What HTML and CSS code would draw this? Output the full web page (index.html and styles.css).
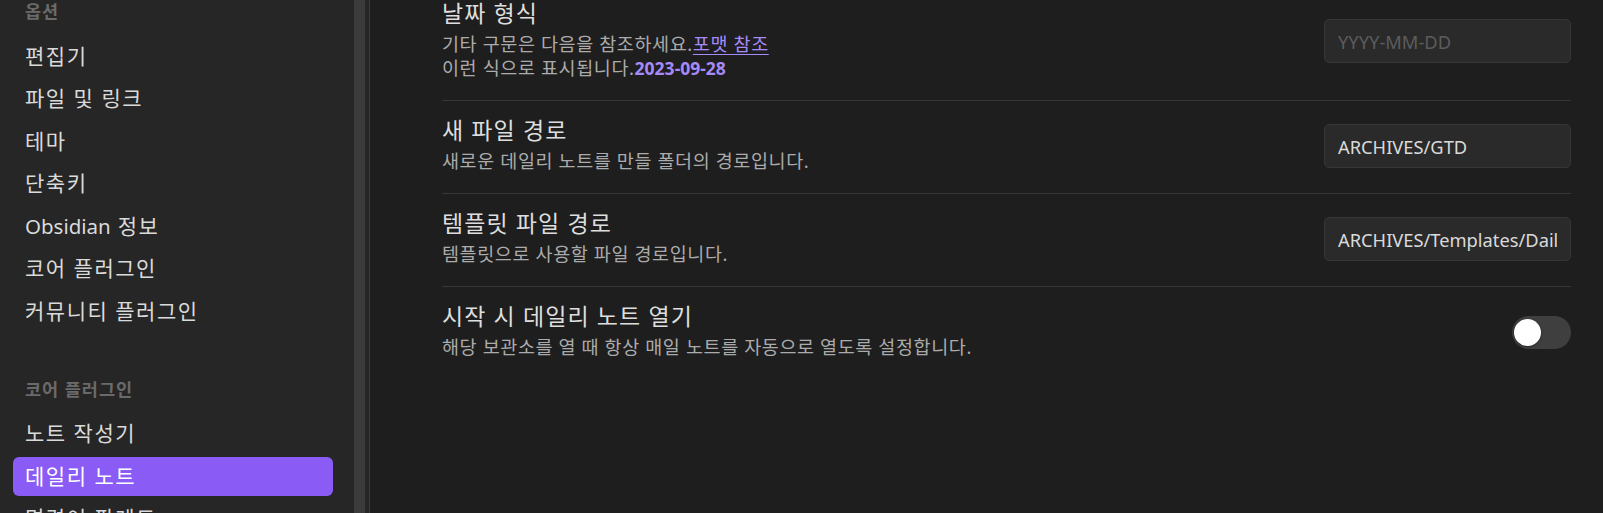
FILE: index.html
```html
<!DOCTYPE html>
<html lang="ko">
<head>
<meta charset="utf-8">
<title>설정 - 데일리 노트</title>
<link rel="stylesheet" href="styles.css">
</head>
<body>
<div class="app">
  <aside class="sidebar">
    <nav class="nav">
      <div class="nav-inner">
        <div class="nav-group">
          <div class="nav-title">옵션</div>
          <div class="nav-item">편집기</div>
          <div class="nav-item">파일 및 링크</div>
          <div class="nav-item">테마</div>
          <div class="nav-item">단축키</div>
          <div class="nav-item"><span class="latin">Obsidian</span> 정보</div>
          <div class="nav-item">코어 플러그인</div>
          <div class="nav-item">커뮤니티 플러그인</div>
        </div>
        <div class="nav-group">
          <div class="nav-title">코어 플러그인</div>
          <div class="nav-item">노트 작성기</div>
          <div class="nav-item is-active">데일리 노트</div>
          <div class="nav-item">명령어 팔레트</div>
        </div>
      </div>
    </nav>
    <div class="scrollbar"><div class="thumb"></div></div>
  </aside>
  <main class="content">
    <div class="setting-item first">
      <div class="info">
        <div class="name">날짜 형식</div>
        <div class="desc">기타 구문은 다음을 참조하세요.<a class="link" href="#">포맷 참조</a><br>이런 식으로 표시됩니다.<b class="value">2023-09-28</b></div>
      </div>
      <div class="control"><input class="text-input" type="text" placeholder="YYYY-MM-DD"></div>
    </div>
    <div class="setting-item">
      <div class="info">
        <div class="name">새 파일 경로</div>
        <div class="desc">새로운 데일리 노트를 만들 폴더의 경로입니다.</div>
      </div>
      <div class="control"><input class="text-input" type="text" value="ARCHIVES/GTD"></div>
    </div>
    <div class="setting-item">
      <div class="info">
        <div class="name">템플릿 파일 경로</div>
        <div class="desc">템플릿으로 사용할 파일 경로입니다.</div>
      </div>
      <div class="control"><input class="text-input" type="text" value="ARCHIVES/Templates/Daily"></div>
    </div>
    <div class="setting-item">
      <div class="info">
        <div class="name">시작 시 데일리 노트 열기</div>
        <div class="desc">해당 보관소를 열 때 항상 매일 노트를 자동으로 열도록 설정합니다.</div>
      </div>
      <div class="control"><div class="toggle"><div class="knob"></div></div></div>
    </div>
  </main>
</div>
</body>
</html>
```
FILE: styles.css
```css
* { box-sizing: border-box; }
html, body { margin: 0; padding: 0; }
body {
  width: 1603px;
  height: 513px;
  overflow: hidden;
  background: #1e1e1e;
  font-family: "Noto Sans", "Noto Sans CJK KR", sans-serif;
  color: #dadada;
}
.app { display: flex; height: 513px; }

.sidebar {
  display: flex;
  width: 370px;
  flex: none;
  background: #262626;
  border-right: 1px solid #3a3a3a;
  overflow: hidden;
}
.nav {
  width: 354px;
  padding: 0 21px 0 13px;
  overflow: hidden;
}
.nav-inner {
  margin-top: -8px;
  display: flex;
  flex-direction: column;
  gap: 39px;
}
.nav-group {
  display: flex;
  flex-direction: column;
  gap: 3.5px;
}
.nav-title {
  height: 39px;
  line-height: 39px;
  padding-left: 12px;
  font-size: 17.5px;
  font-weight: 700;
  letter-spacing: 1px;
  color: #6a6a6a;
  margin-bottom: 2px;
}
.nav-item {
  height: 39px;
  line-height: 39px;
  flex: none;
  padding-left: 12px;
  border-radius: 6px;
  font-size: 21px;
  letter-spacing: 1.5px;
  color: #dadada;
  white-space: nowrap;
}
.nav-item .latin {
  font-size: 20.5px;
  letter-spacing: 0;
}
.nav-item.is-active {
  background: #8a5cf5;
  color: #ffffff;
}
.scrollbar {
  width: 15px;
  padding-right: 4px;
}
.thumb {
  width: 11px;
  height: 100%;
  background: #3b3b3b;
}

.content {
  flex: 1;
  padding: 0 32px 0 72px;
  overflow: hidden;
}
.setting-item {
  display: flex;
  align-items: center;
  justify-content: space-between;
  padding: 14.5px 0 19.5px;
  border-top: 1px solid #363636;
}
.setting-item.first {
  border-top: none;
  margin-top: -16.5px;
}
.info { flex: 1; min-width: 0; }
.name {
  font-size: 23px;
  letter-spacing: 1.1px;
  line-height: 30px;
  color: #dedede;
  white-space: nowrap;
}
.desc {
  margin-top: 4px;
  font-size: 18.5px;
  letter-spacing: 0.6px;
  line-height: 24px;
  color: #ababab;
  white-space: nowrap;
}
.link {
  color: #a68af9;
  text-decoration: underline;
  text-underline-offset: 3px;
}
.value {
  color: #a68af9;
  font-weight: 700;
  font-size: 17.5px;
  letter-spacing: 0;
}
.control {
  flex: none;
  display: flex;
  justify-content: flex-end;
  margin-top: 4px;
}
.text-input {
  width: 247px;
  height: 44px;
  padding: 0 13px;
  background: #2a2a2a;
  border: 1px solid #363636;
  border-radius: 5px;
  font-family: "Noto Sans", sans-serif;
  font-size: 18.3px;
  color: #dadada;
  outline: none;
}
.text-input::placeholder { color: #5c5c5c; }
.toggle {
  width: 59px;
  height: 33px;
  border-radius: 17px;
  background: #3f3f3f;
  display: flex;
  align-items: center;
  padding-left: 2px;
}
.knob {
  width: 27px;
  height: 27px;
  border-radius: 50%;
  background: #ffffff;
  box-shadow: 0 1px 3px rgba(0, 0, 0, 0.35);
}
```
